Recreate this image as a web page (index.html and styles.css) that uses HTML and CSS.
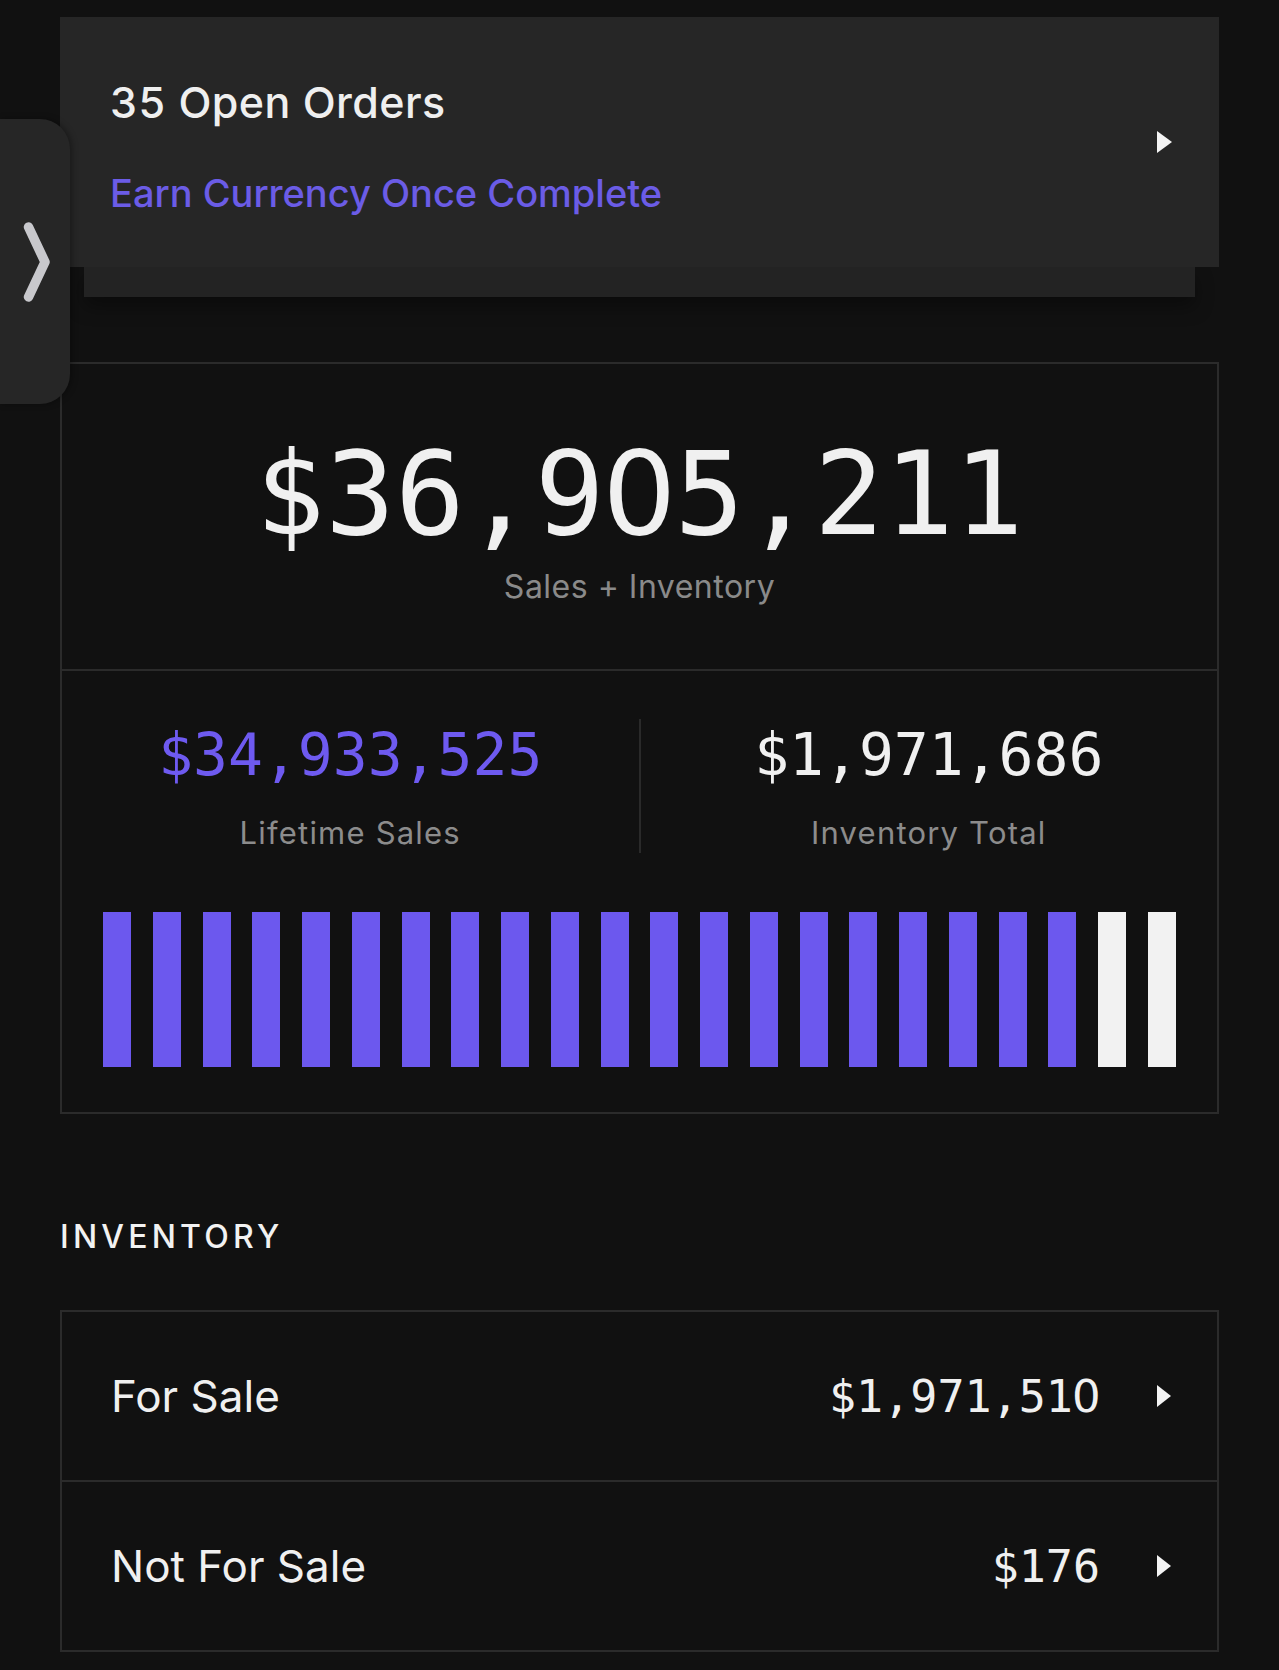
FILE: index.html
```html
<!DOCTYPE html>
<html lang="en">
<head>
<meta charset="utf-8">
<title>Portfolio</title>
<link rel="stylesheet" href="styles.css">
</head>
<body>
<div class="page">
  <div class="side-tab">
    <svg class="side-chevron" width="70" height="285" viewBox="0 0 70 285">
      <path d="M28.5 108 L45 143 L28.5 178" fill="none" stroke="#c8c8cc" stroke-width="9.5" stroke-linecap="round" stroke-linejoin="round"/>
    </svg>
  </div>

  <section class="orders">
    <div class="orders-card">
      <div class="orders-text">
        <div class="orders-title">35 Open Orders</div>
        <div class="orders-sub">Earn Currency Once Complete</div>
      </div>
      <span class="tri"></span>
    </div>
    <div class="orders-under"></div>
  </section>

  <section class="stats">
    <div class="stats-top">
      <div class="big-num">$36,9<span class="zero">0</span>5,211</div>
      <div class="big-label">Sales + Inventory</div>
    </div>
    <div class="stats-bottom">
      <div class="split">
        <div class="col">
          <div class="mid-num purple">$34,933,525</div>
          <div class="mid-label">Lifetime Sales</div>
        </div>
        <div class="vdiv"></div>
        <div class="col">
          <div class="mid-num">$1,971,686</div>
          <div class="mid-label">Inventory Total</div>
        </div>
      </div>
      <div class="bars">
        <span class="bar"></span><span class="bar"></span><span class="bar"></span><span class="bar"></span>
        <span class="bar"></span><span class="bar"></span><span class="bar"></span><span class="bar"></span>
        <span class="bar"></span><span class="bar"></span><span class="bar"></span><span class="bar"></span>
        <span class="bar"></span><span class="bar"></span><span class="bar"></span><span class="bar"></span>
        <span class="bar"></span><span class="bar"></span><span class="bar"></span><span class="bar"></span>
        <span class="bar bar-white"></span><span class="bar bar-white"></span>
      </div>
    </div>
  </section>

  <h2 class="section-title">INVENTORY</h2>

  <div class="list">
    <div class="row">
      <span class="row-name">For Sale</span>
      <span class="row-val">$1,971,51<span class="zero">0</span></span>
      <span class="tri tri-row"></span>
    </div>
    <div class="row">
      <span class="row-name">Not For Sale</span>
      <span class="row-val">$176</span>
      <span class="tri tri-row"></span>
    </div>
  </div>
</div>
</body>
</html>
```

FILE: styles.css
```css
* { box-sizing: border-box; }

html, body {
  margin: 0;
  padding: 0;
  background: #111111;
}

body {
  font-family: "Inter", "Liberation Sans", sans-serif;
  color: #f0f0f0;
}

.page {
  position: relative;
  padding: 17px 60px 0;
  min-height: 1670px;
}

/* side drawer tab */
.side-tab {
  position: absolute;
  left: 0;
  top: 119px;
  width: 70px;
  height: 285px;
  background: #262626;
  border-radius: 0 30px 30px 0;
  box-shadow: 2px 0 6px rgba(0, 0, 0, 0.35);
  z-index: 2;
}

.side-chevron { display: block; }

/* open orders */
.orders-card {
  height: 250px;
  background: #262626;
  display: flex;
  align-items: center;
  padding: 0 47px 0 50px;
  position: relative;
  z-index: 1;
}

.orders-text {
  flex: 1;
  margin-top: 10px;
}

.orders-title {
  font-size: 43px;
  line-height: 42px;
  font-weight: 500;
  letter-spacing: 0.4px;
  color: #efefef;
  font-variant-numeric: tabular-nums;
}

.orders-sub {
  margin-top: 51px;
  font-size: 38px;
  line-height: 39px;
  font-weight: 500;
  color: #6b5ce6;
}

.tri {
  width: 0;
  height: 0;
  border-left: 15px solid #f4f4f4;
  border-top: 11.5px solid transparent;
  border-bottom: 11.5px solid transparent;
  flex: none;
}

.orders-under {
  margin: 0 24px;
  height: 30px;
  background: #232323;
  box-shadow: 0 10px 18px rgba(0, 0, 0, 0.35);
}

/* stats card */
.stats {
  margin-top: 65px;
  border: 2px solid #2b2b2b;
}

.stats-top {
  padding: 72px 0 67px;
  text-align: center;
  border-bottom: 2px solid #2b2b2b;
}

.big-num {
  font-family: "DejaVu Sans Mono", "Liberation Mono", monospace;
  font-size: 116px;
  line-height: 115px;
  color: #f0f0f0;
}

/* plain (undotted) zero, same design family */
.zero {
  font-family: "DejaVu Sans", "Liberation Sans", sans-serif;
  margin: 0 -0.017em;
}

.big-label {
  margin-top: 20px;
  font-size: 32px;
  line-height: 31px;
  letter-spacing: 0.5px;
  color: #8a8a8a;
}

.stats-bottom {
  padding: 48px 41px 45px;
}

.split {
  display: grid;
  grid-template-columns: 1fr 2px 1fr;
  height: 134px;
  margin: 0 -41px;
}

.col {
  text-align: center;
  padding-top: 8px;
}

.vdiv {
  background: #2a2a2a;
}

.mid-num {
  font-family: "DejaVu Sans Mono", "Liberation Mono", monospace;
  font-size: 58px;
  line-height: 57px;
  color: #f0f0f0;
}

.mid-num.purple { color: #6e5af0; }

.mid-label {
  margin-top: 35px;
  font-size: 31px;
  line-height: 28px;
  letter-spacing: 1.2px;
  color: #8c8c8c;
}

.bars {
  margin-top: 59px;
  height: 155px;
  display: flex;
  justify-content: space-between;
}

.bar {
  width: 28px;
  background: #6c58ee;
}

.bar-white { background: #f2f2f2; }

/* inventory */
.section-title {
  margin: 107px 0 57px;
  font-size: 32px;
  line-height: 32px;
  font-weight: 500;
  letter-spacing: 4.2px;
  color: #f2f2f2;
}

.list {
  border: 2px solid #2b2b2b;
}

.row {
  height: 168px;
  display: flex;
  align-items: center;
  padding: 0 46px 0 49px;
}

.row + .row {
  height: 170px;
  border-top: 2px solid #2b2b2b;
}

.row-name {
  flex: 1;
  font-size: 44px;
  line-height: 44px;
  color: #f0f0f0;
}

.row-val {
  font-family: "DejaVu Sans Mono", "Liberation Mono", monospace;
  font-size: 45px;
  line-height: 45px;
  color: #f0f0f0;
}

.tri-row {
  margin-left: 57px;
  border-left-width: 14px;
  border-top-width: 11px;
  border-bottom-width: 11px;
}
```
